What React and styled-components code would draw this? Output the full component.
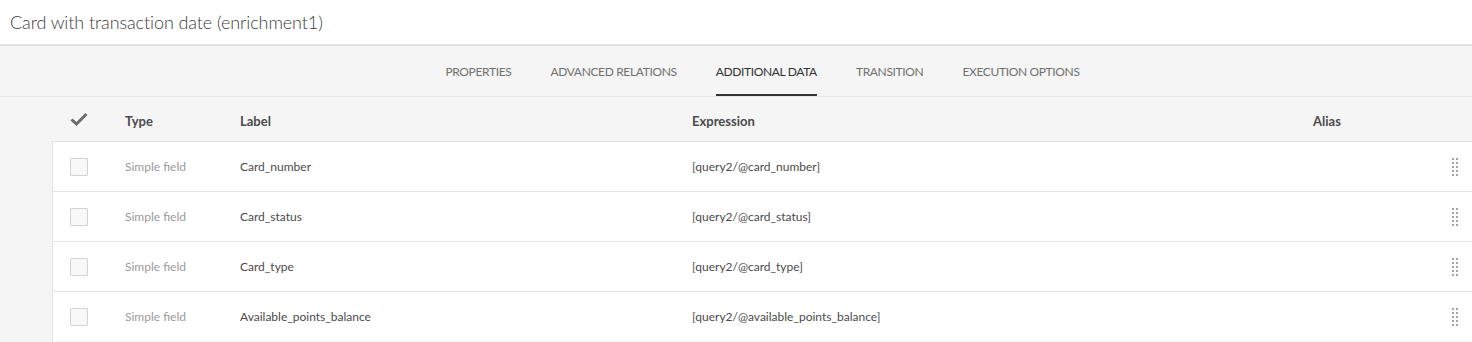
import React from "react";
import styled, {createGlobalStyle} from "styled-components";

const GlobalStyle = createGlobalStyle`
  html, body {
    margin: 0;
    padding: 0;
    background: #f5f5f5;
    font-family: Lato, "Open Sans", sans-serif;
    color: #4b4b4b;
  }
`

const Page = styled.div`
  width: 1472px;
  height: 342px;
  overflow: hidden;
  background: #f5f5f5;
`

const TitleBar = styled.div`
  height: 44px;
  display: flex;
  align-items: center;
  padding-left: 10px;
  background: #fff;
  border-bottom: 2px solid #e1e1e1;
  font-size: 18px;
  font-weight: 300;
  color: #3c3c3c;
  letter-spacing: -0.1px;
`

const TabBar = styled.div`
  height: 51px;
  display: flex;
  justify-content: center;
  align-items: stretch;
  gap: 39px;
  padding-left: 53px;
  border-bottom: 1px solid #e6e6e6;
  box-sizing: border-box;
`

const Tab = styled.div`
  display: flex;
  align-items: center;
  font-size: 12px;
  text-transform: uppercase;
  letter-spacing: -0.35px;
  color: ${p => p.active ? '#323232' : '#707070'};
  border-bottom: 2px solid ${p => p.active ? '#323232' : 'transparent'};
  padding-top: 2px;
`

const Table = styled.div`
  margin-left: 52px;
`

const Row = styled.div`
  display: grid;
  grid-template-columns: 72px 115px 452px 621px 1fr;
  align-items: center;
  height: ${p => p.header ? '44px' : '50px'};
  box-sizing: border-box;
  background: ${p => p.header ? 'transparent' : '#fff'};
  border-left: ${p => p.header ? 'none' : '1px solid #e3e3e3'};
  border-top: ${p => p.header ? 'none' : '1px solid #e3e3e3'};
  padding-left: ${p => p.header ? '1px' : '0'};
  font-size: 12px;
`

const HeadCell = styled.div`
  font-weight: 700;
  font-size: 13px;
  color: #4b4b4b;
  padding-top: 4px;
`

const CheckCell = styled.div`
  display: flex;
  padding-left: 17px;
`

const Checkbox = styled.div`
  width: 18px;
  height: 18px;
  box-sizing: border-box;
  border: 1px solid #d3d3d3;
  background: #f8f8f8;
  border-radius: 1px;
`

const TypeCell = styled.div`
  color: #9a9a9a;
`

const TextCell = styled.div`
  color: #4b4b4b;
`

const HandleCell = styled.div`
  display: flex;
  justify-content: flex-end;
  padding-right: 14px;
`

const Handle = styled.div`
  display: grid;
  grid-template-columns: repeat(2, 2px);
  gap: 2px;
  span {
    width: 2px;
    height: 2px;
    background: #a6a6a6;
  }
`

const tabs = ['Properties', 'Advanced relations', 'Additional data', 'Transition', 'Execution options'];

const fields = [
    {label: 'Card_number', expr: '[query2/@card_number]'},
    {label: 'Card_status', expr: '[query2/@card_status]'},
    {label: 'Card_type', expr: '[query2/@card_type]'},
    {label: 'Available_points_balance', expr: '[query2/@available_points_balance]'},
]

function DragHandle() {
    return <Handle>
        {Array.from({length: 10}).map((_, i) => <span key={i}/>)}
    </Handle>
}

export default function App() {
    return <Page>
        <GlobalStyle/>
        <TitleBar>Card with transaction date (enrichment1)</TitleBar>
        <TabBar>
            {tabs.map(tab => <Tab key={tab} active={tab === 'Additional data'}>{tab}</Tab>)}
        </TabBar>
        <Table>
            <Row header>
                <CheckCell>
                    <svg width="18" height="14" viewBox="0 0 18 14">
                        <path d="M1.5 7.5 L6.5 12 L16.5 2" fill="none" stroke="#6b6b6b" strokeWidth="3"/>
                    </svg>
                </CheckCell>
                <HeadCell>Type</HeadCell>
                <HeadCell>Label</HeadCell>
                <HeadCell>Expression</HeadCell>
                <HeadCell>Alias</HeadCell>
            </Row>
            {fields.map(f =>
                <Row key={f.label}>
                    <CheckCell><Checkbox/></CheckCell>
                    <TypeCell>Simple field</TypeCell>
                    <TextCell>{f.label}</TextCell>
                    <TextCell>{f.expr}</TextCell>
                    <HandleCell><DragHandle/></HandleCell>
                </Row>
            )}
        </Table>
    </Page>
}
